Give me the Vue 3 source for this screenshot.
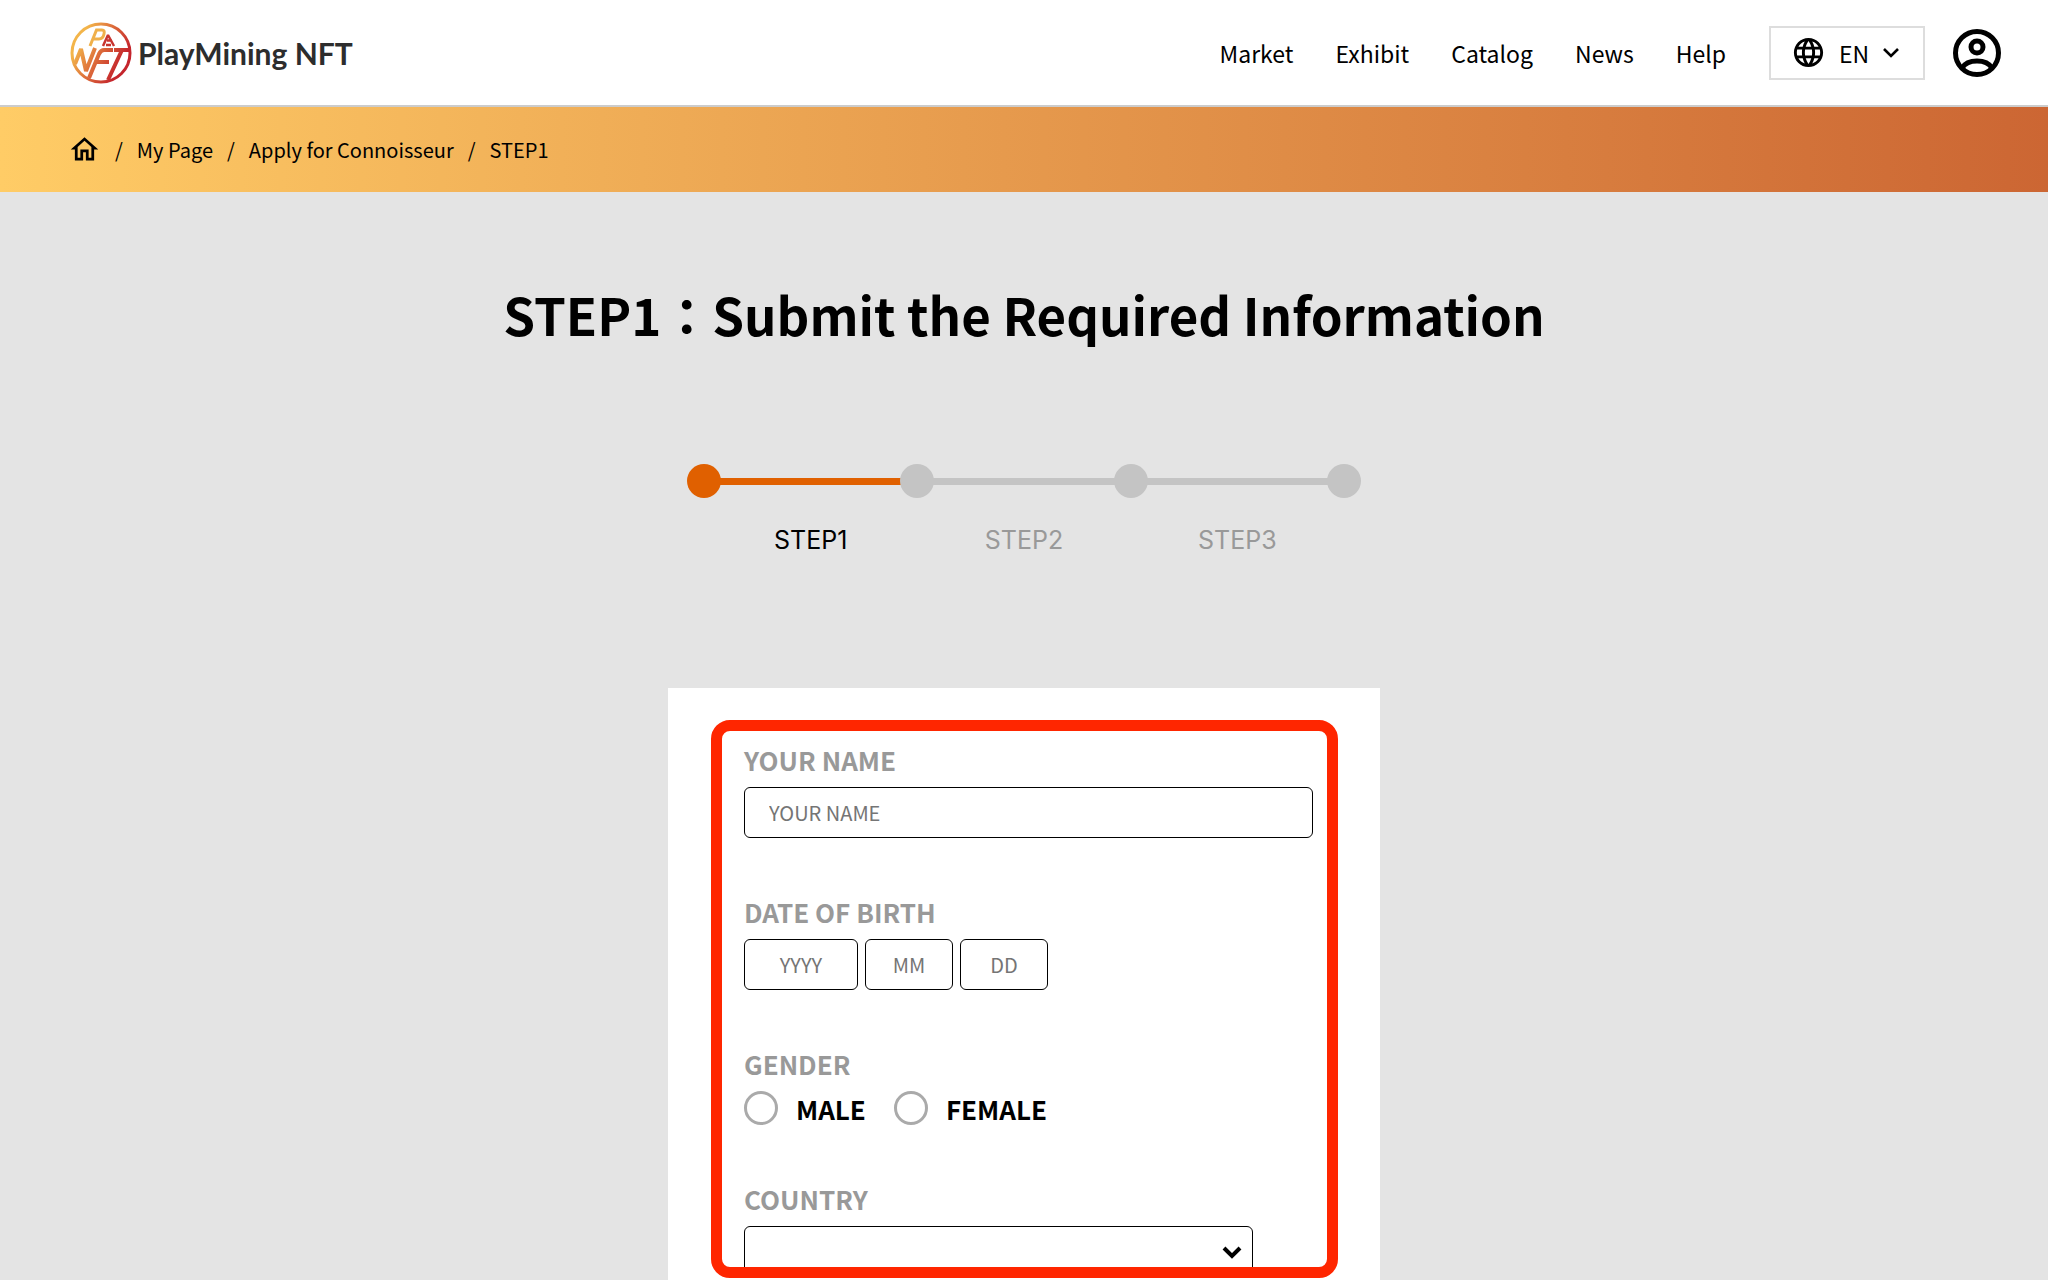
<script setup>
import { ref } from 'vue'

const navItems = ['Market', 'Exhibit', 'Catalog', 'News', 'Help']
const steps = ['STEP1', 'STEP2', 'STEP3']
const current = ref(0)

const form = ref({ name: '', year: '', month: '', day: '', gender: '', country: '' })
</script>

<template>
  <div class="page">
    <header class="header">
      <a class="logo" href="#" aria-label="PlayMining NFT">
        <svg class="logo-mark" viewBox="0 0 62 62" fill="none" aria-hidden="true">
          <defs>
            <linearGradient id="mark" x1="10" y1="18" x2="52" y2="40" gradientUnits="userSpaceOnUse">
              <stop offset="0" stop-color="#f3b54a" />
              <stop offset="0.5" stop-color="#dc6a3a" />
              <stop offset="1" stop-color="#c4252c" />
            </linearGradient>
          </defs>
          <g stroke="url(#mark)">
            <circle cx="31" cy="31" r="29" stroke-width="3" />
            <path stroke="#f0b04a" stroke-width="3" d="M20 24L26.500 8H32Q35 8 34 12Q33 17 29 17H24" />
            <path stroke="#c8352f" stroke-width="2.500" stroke-linejoin="bevel" d="M33 24L38 13L44 24M37 18.500H42M36 23H41" />
            <path stroke-width="4" stroke-linejoin="bevel" d="M5 42L11 27L16 49L25 26M19 56L29 32Q31 28 34 28H43M27 40H39M44 28H59M52 28L38 58" />
          </g>
        </svg>
        <span class="logo-text">PlayMining NFT</span>
      </a>
      <nav class="nav">
        <a v-for="item in navItems" :key="item" href="#">{{ item }}</a>
      </nav>
      <button class="lang" type="button">
        <svg class="globe" viewBox="0 0 24 24" aria-hidden="true">
          <path d="M11.99 2C6.47 2 2 6.48 2 12s4.47 10 9.99 10C17.52 22 22 17.52 22 12S17.52 2 11.99 2zm6.93 6h-2.95c-.32-1.25-.78-2.45-1.38-3.56 1.84.63 3.37 1.91 4.33 3.56zM12 4.04c.83 1.2 1.48 2.53 1.91 3.96h-3.82c.43-1.43 1.08-2.76 1.91-3.96zM4.26 14C4.1 13.36 4 12.69 4 12s.1-1.36.26-2h3.38c-.08.66-.14 1.32-.14 2s.06 1.34.14 2H4.26zm.82 2h2.95c.32 1.25.78 2.45 1.38 3.56-1.84-.63-3.37-1.9-4.33-3.56zm2.95-8H5.08c.96-1.66 2.49-2.93 4.33-3.56C8.81 5.55 8.35 6.75 8.03 8zM12 19.96c-.83-1.2-1.48-2.53-1.91-3.96h3.82c-.43 1.43-1.08 2.76-1.91 3.96zM14.34 14H9.66c-.09-.66-.16-1.32-.16-2s.07-1.35.16-2h4.68c.09.65.16 1.32.16 2s-.07 1.34-.16 2zm.25 5.56c.6-1.11 1.06-2.31 1.38-3.56h2.95c-.96 1.65-2.49 2.93-4.33 3.56zM16.36 14c.08-.66.14-1.32.14-2s-.06-1.34-.14-2h3.38c.16.64.26 1.31.26 2s-.1 1.36-.26 2h-3.38z" />
        </svg>
        <span>EN</span>
        <svg class="caret" viewBox="0 0 16 10" aria-hidden="true">
          <path d="M1 1L8 8L15 1" fill="none" stroke="#000" stroke-width="2.600" />
        </svg>
      </button>
      <a class="account" href="#" aria-label="Account">
        <svg viewBox="0 0 48 48" fill="none" stroke="#000" stroke-width="5" aria-hidden="true">
          <circle cx="24" cy="24" r="21.500" />
          <circle cx="24" cy="18" r="6" />
          <path d="M9 39C12 34 18 32 24 32S36 34 39 39" />
        </svg>
      </a>
    </header>

    <nav class="crumbs" aria-label="Breadcrumb">
      <a class="home" href="#" aria-label="Home">
        <svg viewBox="0 0 24 24" aria-hidden="true">
          <path d="M12 5.690l5 4.500V18h-2v-6H9v6H7v-7.810l5-4.500M12 3L2 12h3v8h6v-6h2v6h6v-8h3L12 3z" />
        </svg>
      </a>
      <span>/</span>
      <a href="#">My Page</a>
      <span>/</span>
      <a href="#">Apply for Connoisseur</a>
      <span>/</span>
      <span>STEP1</span>
    </nav>

    <main class="main">
      <h1>STEP1：Submit the Required Information</h1>

      <div class="progress">
        <div class="track">
          <i class="dot active"></i>
          <template v-for="(s, i) in steps" :key="s">
            <i class="bar" :class="{ active: i <= current }"></i>
            <i class="dot" :class="{ active: i < current }"></i>
          </template>
        </div>
        <ol class="labels">
          <li v-for="(s, i) in steps" :key="s" :class="{ active: i === current }">{{ s }}</li>
        </ol>
      </div>

      <form class="card" @submit.prevent>
        <div class="field">
          <label class="caption" for="name">YOUR NAME</label>
          <input id="name" v-model="form.name" class="box name" type="text" placeholder="YOUR NAME" />
        </div>
        <div class="field">
          <label class="caption" for="year">DATE OF BIRTH</label>
          <div class="date">
            <input id="year" v-model="form.year" class="box year" type="text" placeholder="YYYY" />
            <input v-model="form.month" class="box" type="text" placeholder="MM" aria-label="Month" />
            <input v-model="form.day" class="box" type="text" placeholder="DD" aria-label="Day" />
          </div>
        </div>
        <div class="field" role="radiogroup" aria-labelledby="gender">
          <span id="gender" class="caption">GENDER</span>
          <div class="radios">
            <label><input v-model="form.gender" type="radio" name="gender" value="male" />MALE</label>
            <label><input v-model="form.gender" type="radio" name="gender" value="female" />FEMALE</label>
          </div>
        </div>
        <div class="field">
          <label class="caption" for="country">COUNTRY</label>
          <div class="select">
            <select id="country" v-model="form.country" class="box">
              <option value=""></option>
            </select>
            <svg viewBox="0 0 20 14" aria-hidden="true">
              <path d="M2 2L10 10L18 2" fill="none" stroke="#000" stroke-width="4" />
            </svg>
          </div>
        </div>
        <div class="highlight"></div>
      </form>
    </main>
  </div>
</template>

<style>
body {
  margin: 0;
  background: #e4e4e4;
}
</style>

<style scoped>
* {
  box-sizing: border-box;
}

.page {
  display: flex;
  flex-direction: column;
  min-height: 100vh;
  background: #e4e4e4;
  color: #000;
  font-family: "Noto Sans CJK JP", "Noto Sans", sans-serif;
}

a {
  color: inherit;
  text-decoration: none;
}

svg {
  display: block;
}

.header {
  display: flex;
  align-items: center;
  height: 107px;
  padding: 0 47px 0 70px;
  background: #fff;
  border-bottom: 2px solid #ccc;
}

.logo {
  display: flex;
  align-items: center;
  gap: 6px;
  margin-right: auto;
}

.logo-mark {
  width: 62px;
  height: 62px;
}

.logo-text {
  color: #2d2d2d;
  font: 700 30px/40px Lato, sans-serif;
}

.nav {
  display: flex;
  gap: 42px;
  margin-right: 43px;
  font-size: 23px;
  line-height: 36px;
}

.lang {
  display: flex;
  align-items: center;
  width: 156px;
  height: 54px;
  margin-right: 28px;
  padding: 0 20px;
  background: #fff;
  border: 2px solid #ddd;
  color: #000;
  font-family: inherit;
  font-size: 23px;
  line-height: 36px;
}

.globe {
  width: 35px;
  height: 35px;
  margin-right: 13px;
}

.caret {
  width: 16px;
  height: 10px;
  margin-left: 14px;
}

.account svg {
  width: 48px;
  height: 48px;
}

.crumbs {
  display: flex;
  align-items: center;
  gap: 14px;
  height: 85px;
  padding: 0 68px;
  background: linear-gradient(to right, #ffcc66, #cc6633);
  font-size: 20px;
  line-height: 32px;
}

.home svg {
  width: 33px;
  height: 33px;
}

.main {
  display: flex;
  flex: 1;
  flex-direction: column;
  align-items: center;
}

h1 {
  margin: 82px 0 0;
  font-size: 51px;
  font-weight: 700;
  line-height: 80px;
}

.progress {
  width: 674px;
  margin-top: 110px;
}

.track {
  display: flex;
  align-items: center;
}

.dot {
  width: 34px;
  height: 34px;
  border-radius: 50%;
  background: #c4c4c4;
}

.bar {
  flex: 1;
  height: 7px;
  margin: 0 -1px;
  background: #c4c4c4;
}

.dot.active,
.bar.active {
  background: #e06000;
}

.labels {
  display: flex;
  margin: 26px 0 0;
  padding: 0 17px;
  list-style: none;
  color: #999;
  font-family: Inter, sans-serif;
  font-size: 25px;
  line-height: 32px;
}

.labels li {
  flex: 1;
  text-align: center;
}

.labels .active {
  color: #000;
}

.card {
  position: relative;
  display: flex;
  flex: 1;
  flex-direction: column;
  gap: 54px;
  width: 712px;
  margin-top: 132px;
  padding: 52px 67px 3px 76px;
  background: #fff;
}

.caption {
  display: block;
  margin-bottom: 7px;
  color: #999;
  font-size: 26px;
  font-weight: 700;
  line-height: 40px;
}

.box {
  display: block;
  width: 88px;
  height: 51px;
  padding: 0;
  background: #fff;
  border: 1px solid #000;
  border-radius: 6px;
  color: #000;
  font-family: inherit;
  font-size: 20px;
  text-align: center;
}

.box::placeholder {
  color: #757575;
}

.box.name {
  width: 100%;
  padding: 0 24px;
  text-align: left;
}

.box.year {
  width: 114px;
}

.date {
  display: flex;
  gap: 7px;
}

.radios {
  display: flex;
  gap: 28px;
}

.radios label {
  display: flex;
  align-items: flex-start;
  gap: 18px;
  height: 34px;
  font-size: 26px;
  font-weight: 700;
  line-height: 36px;
}

.radios input {
  appearance: none;
  width: 34px;
  height: 34px;
  margin: 0;
  border: 3px solid #aaa;
  border-radius: 50%;
}

.radios input:checked {
  background: radial-gradient(#e06000 50%, #fff 55%);
}

.select {
  position: relative;
  width: 509px;
}

.select .box {
  appearance: none;
  width: 100%;
}

.select svg {
  position: absolute;
  top: 20px;
  right: 11px;
  width: 20px;
  height: 14px;
  pointer-events: none;
}

.highlight {
  position: absolute;
  inset: 32px 42px 2px 43px;
  border: 11px solid #ff2600;
  border-radius: 19px;
  pointer-events: none;
}
</style>
